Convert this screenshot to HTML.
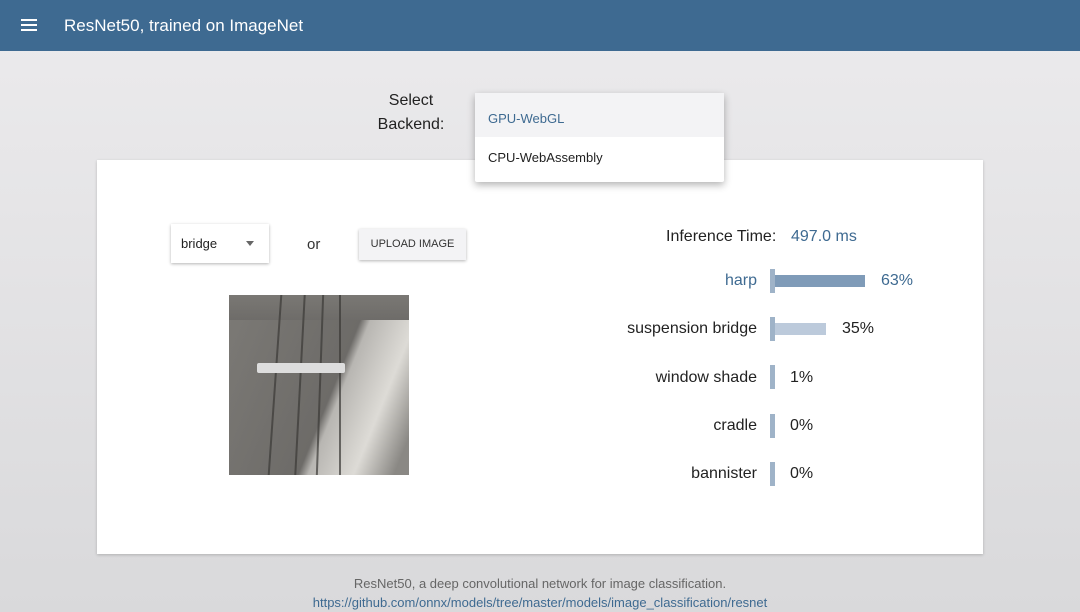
<!DOCTYPE html>
<html><head><meta charset="utf-8"><style>
*{margin:0;padding:0;box-sizing:border-box}
body{width:1080px;height:612px;overflow:hidden;font-family:"Liberation Sans",Helvetica,sans-serif;background:linear-gradient(#ecebed,#d9d9db);position:relative;color:#222}
.hdr{position:absolute;left:0;top:0;width:1080px;height:51px;background:#3e6a91;color:#fff}
.hdr .t{position:absolute;left:64px;top:16px;font-size:17px}
.ham{position:absolute;left:21px;top:19px;width:16px}
.ham i{display:block;height:2px;background:#fff;margin-bottom:3px}
.abs{position:absolute}
.card{position:absolute;left:97px;top:160px;width:886px;height:394px;background:#fff;box-shadow:0 1px 3px rgba(0,0,0,.2)}
.menu{position:absolute;left:475px;top:93px;width:249px;height:89px;background:#fff;box-shadow:0 3px 8px rgba(0,0,0,.3);border-radius:2px;font-size:13px}
.r{font-size:16px;text-align:right;width:180px;left:577px}
.bar{position:absolute;left:770px;width:5px;height:24px;background:#9fb3c8}
.p{font-size:16px;left:790px}
.c{position:absolute;top:0;height:180px;width:2px;background:#3a3936;opacity:.7}
</style></head><body>
<div class="hdr"><div class="ham"><i></i><i></i><i></i></div><div class="t">ResNet50, trained on ImageNet</div></div>
<div class="abs" style="left:370px;top:89px;font-size:16px;line-height:24px;text-align:center;width:82px">Select<br>Backend:</div>
<div class="card"></div>
<div class="menu">
<div style="background:#f3f3f5;height:44px;padding:18px 0 0 13px;color:#3e6a91">GPU-WebGL</div>
<div style="padding:13px 0 0 13px">CPU-WebAssembly</div>
</div>
<div class="abs" style="left:171px;top:224px;width:98px;height:39px;background:#fff;box-shadow:0 1px 3px rgba(0,0,0,.3);font-size:13px;padding:12px 10px">bridge<span style="position:absolute;left:75px;top:17px;border:4px solid transparent;border-top:5px solid #666;width:0;height:0"></span></div>
<div class="abs" style="left:307px;top:236px;font-size:15px;color:#333">or</div>
<div class="abs" style="left:359px;top:229px;width:107px;height:31px;background:#f3f3f5;box-shadow:0 1px 3px rgba(0,0,0,.3);font-size:11px;text-align:center;line-height:31px;color:#333">UPLOAD IMAGE</div>
<div class="abs" style="left:229px;top:295px;width:180px;height:180px;background:linear-gradient(112deg,#7c7a76 0%,#6d6b68 56%,#b8b6b2 60%,#dddbd6 78%,#8a8884 94%);overflow:hidden">
<div style="position:absolute;left:0;top:0;width:180px;height:25px;background:linear-gradient(#7a7874,#6e6c69)"></div>
<div class="c" style="left:45px;transform:skewX(-4deg)"></div>
<div class="c" style="left:70px;transform:skewX(-3deg)"></div>
<div class="c" style="left:90px;transform:skewX(-2deg)"></div>
<div class="c" style="left:110px"></div>
<div style="position:absolute;left:28px;top:68px;width:88px;height:10px;background:#ddd;border-radius:2px"></div>
</div>
<div class="abs" style="left:666px;top:228px;font-size:16px">Inference Time:</div>
<div class="abs" style="left:791px;top:228px;font-size:16px;color:#3e6a91">497.0 ms</div>
<div class="abs r" style="top:272px;color:#3e6a91">harp</div>
<div class="bar" style="top:269px"></div><div class="abs" style="left:775px;top:275px;width:90px;height:12px;background:#7f9bb8"></div>
<div class="abs p" style="left:881px;top:272px;color:#3e6a91">63%</div>
<div class="abs r" style="top:320px">suspension bridge</div>
<div class="bar" style="top:317px"></div><div class="abs" style="left:775px;top:323px;width:51px;height:12px;background:#bccadb"></div>
<div class="abs p" style="left:842px;top:320px">35%</div>
<div class="abs r" style="top:369px">window shade</div><div class="bar" style="top:365px"></div><div class="abs p" style="top:369px">1%</div>
<div class="abs r" style="top:417px">cradle</div><div class="bar" style="top:414px"></div><div class="abs p" style="top:417px">0%</div>
<div class="abs r" style="top:465px">bannister</div><div class="bar" style="top:462px"></div><div class="abs p" style="top:465px">0%</div>
<div class="abs" style="left:0;width:1080px;top:576px;text-align:center;font-size:13px;color:#666">ResNet50, a deep convolutional network for image classification.</div>
<div class="abs" style="left:0;width:1080px;top:595px;text-align:center;font-size:13px;color:#3e6a91">https://github.com/onnx/models/tree/master/models/image_classification/resnet</div>
</body></html>
